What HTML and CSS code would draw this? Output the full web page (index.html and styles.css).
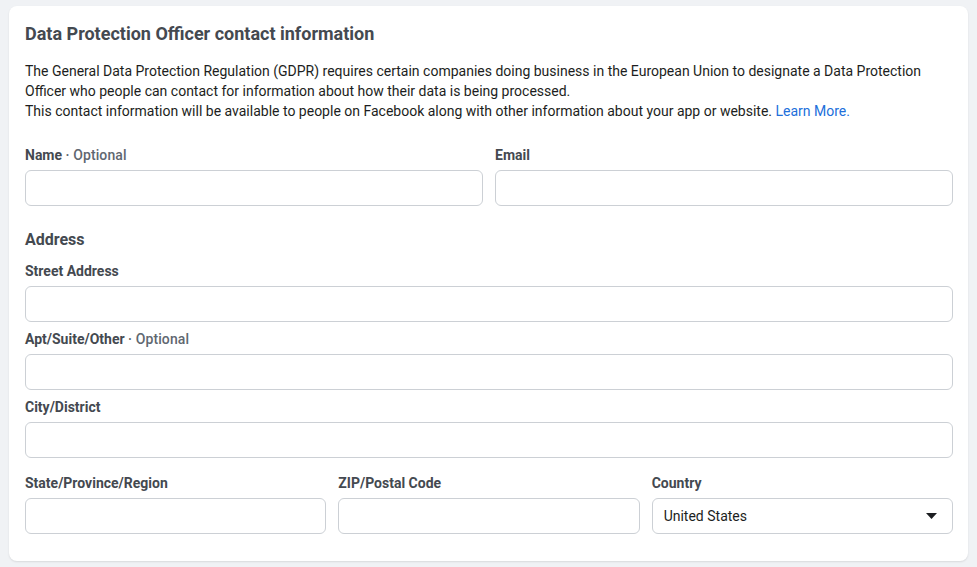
FILE: index.html
```html
<!DOCTYPE html>
<html lang="en">
<head>
<meta charset="utf-8">
<title>Data Protection Officer contact information</title>
<link rel="stylesheet" href="styles.css">
</head>
<body>
<div class="card">
  <h2 class="title">Data Protection Officer contact information</h2>
  <p class="desc">The General Data Protection Regulation (GDPR) requires certain companies doing business in the European Union to designate a Data Protection Officer who people can contact for information about how their data is being processed.<br>This contact information will be available to people on Facebook along with other information about your app or website. <a class="link" href="#">Learn More.</a></p>

  <div class="row two">
    <div class="field">
      <label class="label">Name <span class="opt">· Optional</span></label>
      <div class="input"></div>
    </div>
    <div class="field">
      <label class="label">Email</label>
      <div class="input"></div>
    </div>
  </div>

  <h3 class="section">Address</h3>

  <div class="field first">
    <label class="label">Street Address</label>
    <div class="input"></div>
  </div>
  <div class="field">
    <label class="label">Apt/Suite/Other <span class="opt">· Optional</span></label>
    <div class="input"></div>
  </div>
  <div class="field">
    <label class="label">City/District</label>
    <div class="input"></div>
  </div>

  <div class="row three">
    <div class="field">
      <label class="label">State/Province/Region</label>
      <div class="input"></div>
    </div>
    <div class="field">
      <label class="label">ZIP/Postal Code</label>
      <div class="input"></div>
    </div>
    <div class="field">
      <label class="label">Country</label>
      <div class="input select">
        <span>United States</span>
        <svg class="caret" width="11" height="6" viewBox="0 0 11 6"><path d="M0 0 H11 L5.5 6 Z" fill="#1c1e21"/></svg>
      </div>
    </div>
  </div>
</div>
</body>
</html>
```

FILE: styles.css
```css
html, body {
  margin: 0;
  height: 100%;
}
body {
  background: #f0f2f5;
  padding: 6px 9px;
  box-sizing: border-box;
  font-family: Roboto, "Liberation Sans", Arial, sans-serif;
  color: #1c1e21;
}
.card {
  background: #fff;
  border-radius: 8px;
  box-shadow: 0 1px 2px rgba(0,0,0,0.1);
  height: 555px;
  box-sizing: border-box;
  padding: 17px 15px 16px 16px;
}
.title {
  margin: 0;
  font-size: 18px;
  line-height: 22px;
  font-weight: 700;
  color: #444950;
}
.desc {
  margin: 16px 0 0;
  font-size: 14px;
  line-height: 20px;
  color: #1c1e21;
}
.link {
  color: #216fdb;
  text-decoration: none;
}
.row {
  display: grid;
  gap: 12px;
}
.two {
  grid-template-columns: 1fr 1fr;
  margin-top: 25px;
}
.three {
  grid-template-columns: 1fr 1fr 1fr;
  margin-top: 16px;
}
.field {
  display: flex;
  flex-direction: column;
  margin-top: 8px;
}
.row .field, .field.first {
  margin-top: 0;
}
.field.first {
  margin-top: 12px;
}
.label {
  font-size: 14px;
  line-height: 18px;
  font-weight: 700;
  color: #444950;
  margin-bottom: 6px;
}
.opt {
  font-weight: 500;
  color: #606770;
  letter-spacing: 0.1px;
}
.section {
  margin: 24px 0 0;
  font-size: 16px;
  line-height: 20px;
  font-weight: 700;
  color: #444950;
}
.input {
  height: 36px;
  box-sizing: border-box;
  border: 1px solid #ccd0d5;
  border-radius: 6px;
  background: #fff;
}
.select {
  display: flex;
  align-items: center;
  justify-content: space-between;
  padding: 0 15px 0 11px;
  font-size: 14px;
  color: #1c1e21;
}
.caret {
  display: block;
}
```
